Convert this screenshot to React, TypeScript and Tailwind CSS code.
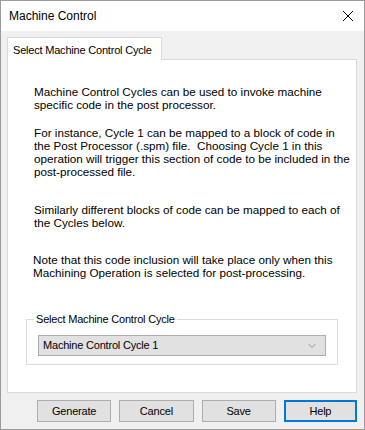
import { ChevronDown } from 'lucide-react';

const font = { fontFamily: '"Liberation Sans", Arial, sans-serif' };

const buttons = ['Generate', 'Cancel', 'Save', 'Help'];

export default function App() {
  return (
    <div
      className="w-[365px] h-[430px] flex flex-col bg-[#f0f0f0] border border-[#9a9a9a] text-[11.7px] text-black overflow-hidden"
      style={font}
    >
      {/* title bar */}
      <div className="h-[30px] bg-white flex items-center pl-2 pr-[10px] shrink-0">
        <span className="text-[12px] flex-1">Machine Control</span>
        <svg width="12" height="12" viewBox="0 0 12 12" className="text-black">
          <path d="M1 1 L11 11 M11 1 L1 11" stroke="currentColor" strokeWidth="1" />
        </svg>
      </div>

      <div className="flex-1 flex flex-col pt-[6px] pl-[6px] pr-[7px] pb-[7px]">
        {/* tab */}
        <div className="flex">
          <div className="h-[23px] w-[155px] bg-white border border-[#d9d9d9] border-b-0 px-[5px] pt-[4px] text-[11px] tracking-[-0.2px] whitespace-nowrap relative z-10 -mb-px">
            Select Machine Control Cycle
          </div>
        </div>
        {/* panel */}
        <div className="h-[334px] bg-white border border-[#d9d9d9] flex flex-col pt-[25px] pl-[26px] pr-[10px] leading-[13px] whitespace-nowrap">
          <p>
            Machine Control Cycles can be used to invoke machine<br />
            specific code in the post processor.
          </p>
          <p className="mt-[15px]">
            For instance, Cycle 1 can be mapped to a block of code in<br />
            the Post Processor (.spm) file.&nbsp; Choosing Cycle 1 in this<br />
            operation will trigger this section of code to be included in the<br />
            post-processed file.
          </p>
          <p className="mt-[25px]">
            Similarly different blocks of code can be mapped to each of<br />
            the Cycles below.
          </p>
          <p className="mt-[24px] -ml-px">
            Note that this code inclusion will take place only when this<br />
            Machining Operation is selected for post-processing.
          </p>

          <fieldset className="mt-[33px] -ml-[8px] w-[312px] h-[53px] border border-[#dcdcdc] px-0 pb-[13px]">
            <legend className="ml-[7px] px-[2px] text-[11px] tracking-[-0.2px] leading-[14px]">Select Machine Control Cycle</legend>
            <div className="mt-[9px] mx-[11px] h-[21px] bg-[#e1e1e1] border border-[#adadad] flex items-center pl-[4px] pr-[7px] text-[11px] tracking-[-0.2px]">
              <span className="flex-1">Machine Control Cycle 1</span>
              <ChevronDown size={12} strokeWidth={1} className="text-[#444]" />
            </div>
          </fieldset>
        </div>

        {/* buttons */}
        <div className="mt-[7px] flex gap-[8px] pl-[30px]">
          {buttons.map((b) => (
            <button
              key={b}
              className={
                b === 'Help'
                  ? 'w-[74px] h-[22px] bg-[#e1e1e1] border-2 border-[#0078d7] text-[11px] tracking-[-0.2px]'
                  : 'w-[75px] h-[22px] bg-[#e1e1e1] border border-[#adadad] text-[11px] tracking-[-0.2px]'
              }
            >
              {b}
            </button>
          ))}
        </div>
      </div>
    </div>
  );
}
